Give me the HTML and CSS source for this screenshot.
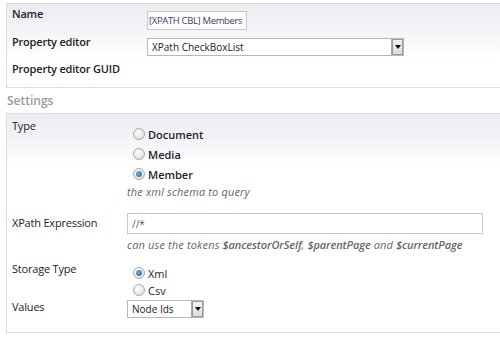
FILE: index.html
```html
<html>
    <head>
        <link rel="stylesheet" href="styles.css">
    </head>
    <body>
        <div class="panel top-panel">
            <div class="row row-name">
                <label class="label">Name</label>
                <input class="text-name" type="text" value="[XPATH CBL] Members"/>
            </div>
            <div class="row row-editor">
                <label class="label">Property editor</label>
                <div class="select select-wide">
                    <span class="select-text">XPath CheckBoxList</span>
                    <span class="select-btn"><span class="arrow"></span></span>
                </div>
            </div>
            <div class="row row-guid">
                <label class="label">Property editor GUID</label>
            </div>
        </div>
        <div class="heading">Settings</div>
        <div class="panel settings-panel">
            <div class="row row-type">
                <label class="label label-light">Type</label>
                <div class="field">
                    <div class="radios radios-type">
                        <label class="radio"><span class="dot"></span>Document</label>
                        <label class="radio"><span class="dot"></span>Media</label>
                        <label class="radio"><span class="dot on"></span>Member</label>
                    </div>
                    <div class="hint">the xml schema to query</div>
                </div>
            </div>
            <div class="row row-xpath">
                <label class="label label-light">XPath Expression</label>
                <div class="field">
                    <input class="text-xpath" type="text" value="//*"/>
                    <div class="hint">can use the tokens <b>$ancestorOrSelf</b>, <b>$parentPage</b> and <b>$currentPage</b></div>
                </div>
            </div>
            <div class="row row-storage">
                <label class="label label-light">Storage Type</label>
                <div class="radios radios-storage">
                    <label class="radio"><span class="dot on"></span>Xml</label>
                    <label class="radio"><span class="dot"></span>Csv</label>
                </div>
            </div>
            <div class="row row-values">
                <label class="label label-light">Values</label>
                <div class="select select-small">
                    <span class="select-text">Node Ids</span>
                    <span class="select-btn"><span class="arrow"></span></span>
                </div>
            </div>
        </div>
    </body>
</html>
```

FILE: styles.css
```css
body {
    margin: 0;
    padding: 3px 0 0 6px;
    font-family: "Open Sans", "DejaVu Sans", sans-serif;
    font-size: 11px;
    color: #222;
    background: #fff;
}
.panel {
    border: 1px solid #dcdcdc;
    border-right: none;
    background: linear-gradient(#ebebf1, #ffffff 55px);
}
.top-panel {
    height: 81px;
    padding: 2px 0 0 5px;
}
.settings-panel {
    height: 214px;
    padding: 4px 0 0 5px;
}
.row {
    display: flex;
    align-items: flex-start;
}
.label {
    font-weight: 600;
    letter-spacing: -0.2px;
}
.label-light {
    font-weight: 500;
}
.top-panel .label {
    width: 135px;
    flex: none;
}
.settings-panel .label {
    width: 115px;
    flex: none;
}
.row-name {
    height: 28px;
}
.row-editor {
    height: 27px;
}
.text-name {
    box-sizing: border-box;
    margin-top: 5px;
    width: 100px;
    height: 19px;
    border: 1px solid #c8c8c8;
    padding: 0 1px;
    font-family: "Open Sans", sans-serif;
    font-size: 9.5px;
    letter-spacing: -0.35px;
    color: #4a3a5e;
    background: #fff;
}
.select {
    display: flex;
    border: 1px solid #b8b8b8;
    background: #fff;
    height: 16px;
}
.select-wide {
    width: 255px;
    margin-top: 4px;
}
.select-small {
    width: 75px;
    margin-top: 1px;
}
.select-text {
    flex: 1;
    padding-left: 4px;
    font-size: 10px;
    line-height: 16px;
}
.select-btn {
    width: 11px;
    border-left: 1px solid #aaa;
    background: linear-gradient(#f4f4f4, #dcdcdc);
    display: flex;
    align-items: center;
    justify-content: center;
    box-shadow: inset 0 0 0 1px #999;
}
.arrow {
    width: 0;
    height: 0;
    border-left: 3px solid transparent;
    border-right: 3px solid transparent;
    border-top: 4px solid #111;
}
.heading {
    padding: 4px 0 5px 1px;
    font-size: 12px;
    font-weight: 600;
    color: #9a9a9a;
    height: 16px;
}
.row-type {
    height: 95px;
}
.field {
    display: flex;
    flex-direction: column;
}
.radios {
    display: flex;
    flex-direction: column;
    font-weight: 600;
    color: #1e1e2e;
}
.radios-type {
    padding: 9px 0 0 6px;
    gap: 6px;
}
.radio {
    display: flex;
    align-items: center;
    gap: 3px;
    height: 14px;
}
.dot {
    width: 10px;
    height: 10px;
    border-radius: 50%;
    border: 1px solid #aaa;
    background: radial-gradient(circle at 40% 35%, #fff, #d6d6d6);
    position: relative;
}
.dot.on::after {
    content: "";
    position: absolute;
    left: 2px;
    top: 2px;
    width: 6px;
    height: 6px;
    border-radius: 50%;
    background: radial-gradient(circle at 40% 35%, #6ab0e6, #1a5f9a);
}
.hint {
    font-style: italic;
    font-size: 11px;
    letter-spacing: 0.15px;
    color: #666;
    padding-top: 3px;
}
.hint b {
    font-weight: 600;
    letter-spacing: -0.1px;
}
.row-xpath {
    height: 48px;
}
.row-xpath .label {
    padding-top: 2px;
}
.text-xpath {
    width: 356px;
    height: 21px;
    border: 1px solid #c8c8c8;
    padding: 0 4px;
    font-family: "Open Sans", sans-serif;
    font-size: 10px;
    color: #555;
}
.row-storage {
    height: 38px;
}
.radios-storage {
    padding: 5px 0 0 6px;
    gap: 3px;
    font-weight: 500;
}
```
